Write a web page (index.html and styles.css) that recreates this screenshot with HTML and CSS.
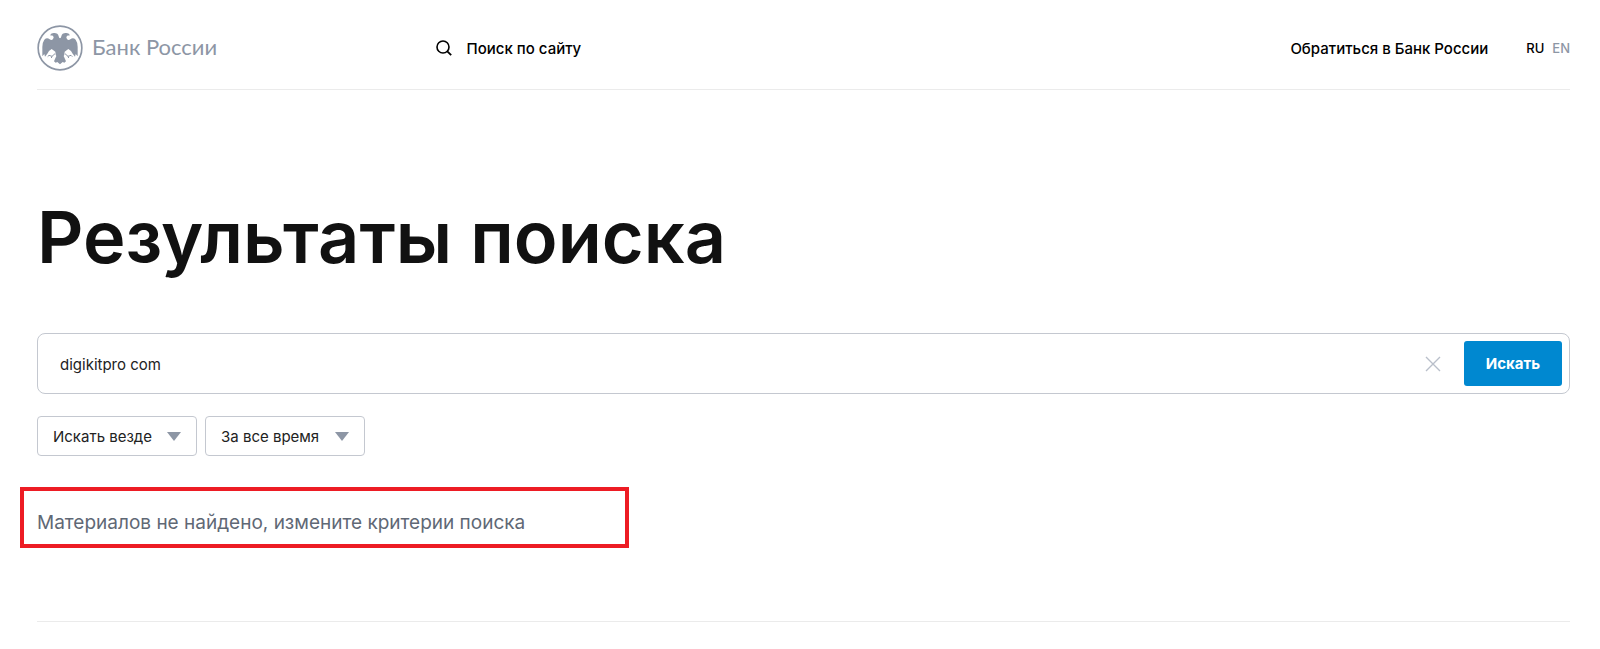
FILE: index.html
```
<!DOCTYPE html>
<html lang="ru">
<head>
    <meta charset="UTF-8">
    <meta name="viewport" content="width=device-width, initial-scale=1.0">
    <title>Результаты поиска | Банк России</title>
    <link rel="stylesheet" href="styles.css">
</head>
<body>

<header class="header">
    <a class="logo" href="#">
        <svg class="logo-icon" viewBox="0 0 138 138" aria-hidden="true">
            <circle cx="69" cy="69" r="65.5" fill="none" stroke="#8d96a5" stroke-width="5"/>
            <path fill="#8d96a5" d="M39 31 Q43 23 52 24 Q63 24 65 34 Q66 40 69 40 Q72 40 73 34 Q75 24 86 24 Q95 23 99 31 L90 32 Q86 37 90 42 Q94 48 100 43 Q108 36 116 44 Q122 52 122 66 L122 94 L116 87 L114 95 L107 86 L102 78 L94 72 L83 80 L82 89 L80 93 L87 109 L82 113 L77 111 L69 118 L61 111 L56 113 L51 109 L58 93 L56 89 L55 80 L44 72 L36 78 L31 86 L24 95 L22 87 L16 94 L16 66 Q16 52 22 44 Q30 36 38 43 Q44 48 48 42 Q52 37 48 32 Z"/>
            <!-- claws -->
            <path fill="none" stroke="#8d96a5" stroke-width="3" d="M54 86 L45 94 L36 91 M45 94 L43 99 M36 91 L32 95 M84 86 L93 94 L102 91 M93 94 L95 99 M102 91 L106 95"/>
        </svg>
        <span class="logo-text">Банк России</span>
    </a>
    <a class="search-link" href="#search">
        <svg class="search-icon" viewBox="0 0 16 16" aria-hidden="true">
            <circle cx="7" cy="7" r="6" fill="none" stroke="#000" stroke-width="1.6"/>
            <path d="M11.3 11.3 L15.2 15.2" stroke="#000" stroke-width="1.8"/>
        </svg>
        Поиск по сайту
    </a>
    <a class="contact-link" href="#">Обратиться в Банк России</a>
    <nav class="lang">
        <a class="active" href="#">RU</a>
        <a href="#">EN</a>
    </nav>
</header>

<main>
    <div class="container">
        <h1>Результаты поиска</h1>

        <form id="search">
            <div class="search-box">
                <input type="text" class="search-input" aria-label="Поиск" value="digikitpro com">
                <button type="reset" class="clear-button" aria-label="Очистить">
                    <svg viewBox="0 0 16 16" aria-hidden="true">
                        <path d="M1 1 L15 15 M15 1 L1 15" stroke="#b9bfca" stroke-width="1.4"/>
                    </svg>
                </button>
                <button type="submit" class="submit-button">Искать</button>
            </div>
            <div class="filters">
                <div class="select-box">
                    <select aria-label="Где искать">
                        <option>Искать везде</option>
                    </select>
                </div>
                <div class="select-box">
                    <select aria-label="Период">
                        <option>За все время</option>
                    </select>
                </div>
            </div>
        </form>
    </div>

    <div class="results">
        <p class="message">Материалов не найдено, измените критерии поиска</p>
    </div>
</main>

<footer class="footer"></footer>

</body>
</html>
```

FILE: styles.css
```
* {
    box-sizing: border-box;
}

body {
    margin: 0;
    background: #fff;
    color: #111;
    font-family: Inter, "Liberation Sans", sans-serif;
    font-size: 15px;
}

a {
    color: #000;
    text-decoration: none;
}

/* Header */
.header {
    display: flex;
    align-items: center;
    margin: 0 30px 0 37px;
    padding: 25px 0 18px;
    border-bottom: 1px solid #ebebeb;
}

.logo {
    display: flex;
    align-items: center;
    gap: 9px;
    flex: 0 0 26%;
    color: #8d96a5;
}

.logo-icon {
    width: 46px;
    height: 46px;
}

.logo-text {
    font-family: Lato, sans-serif;
    font-size: 22px;
    line-height: 26px;
    padding-bottom: 2px;
}

.search-link {
    display: flex;
    align-items: center;
    gap: 15px;
    font-weight: 500;
}

.search-icon {
    width: 16px;
    height: 16px;
}

.contact-link {
    margin-left: auto;
    font-weight: 500;
}

.lang {
    display: flex;
    gap: 8px;
    margin-left: 38px;
    font-size: 13px;
    font-weight: 500;
}

.lang a {
    color: #8d96a5;
}

.lang .active {
    color: #000;
}

/* Search form */
.container {
    padding: 0 30px 0 37px;
}

h1 {
    margin: 102px 0 51px;
    font-size: 72px;
    line-height: 90px;
    font-weight: 600;
}

.search-box {
    display: flex;
    align-items: center;
    padding: 7px;
    border: 1px solid #c4c8d0;
    border-radius: 8px;
}

.search-input {
    flex: 1;
    min-width: 0;
    height: 45px;
    padding: 2px 15px 0;
    border: none;
    outline: none;
    color: #222;
    font: inherit;
}

.clear-button {
    padding: 0;
    border: none;
    background: none;
    margin-right: 23px;
    cursor: pointer;
}

.clear-button svg {
    display: block;
    width: 16px;
    height: 16px;
}

.submit-button {
    width: 98px;
    height: 45px;
    border: none;
    border-radius: 3px;
    background: #0088d0;
    color: #fff;
    font: inherit;
    font-weight: 700;
    cursor: pointer;
}

.filters {
    display: flex;
    gap: 8px;
    margin-top: 22px;
}

.select-box {
    position: relative;
}

.select-box select {
    display: block;
    width: 160px;
    height: 40px;
    padding: 0 15px;
    border: 1px solid #c4c8d0;
    border-radius: 4px;
    background: #fff;
    color: #222;
    font: inherit;
    appearance: none;
}

/* Dropdown arrow */
.select-box::after {
    content: "";
    position: absolute;
    top: 16px;
    right: 16px;
    border: 7px solid transparent;
    border-top: 9px solid #8d96a5;
    border-bottom: none;
    pointer-events: none;
}

/* Results */
.results {
    padding: 31px 30px 0 20px;
}

.message {
    width: 100%;
    max-width: 609px;
    margin: 0;
    padding: 19px 13px 8px;
    border: 4px solid #ed1c24;
    color: #5f6875;
    font-size: 19px;
    line-height: 26px;
}

.footer {
    margin: 73px 30px 0 37px;
    border-top: 1px solid #ebebeb;
}
```
